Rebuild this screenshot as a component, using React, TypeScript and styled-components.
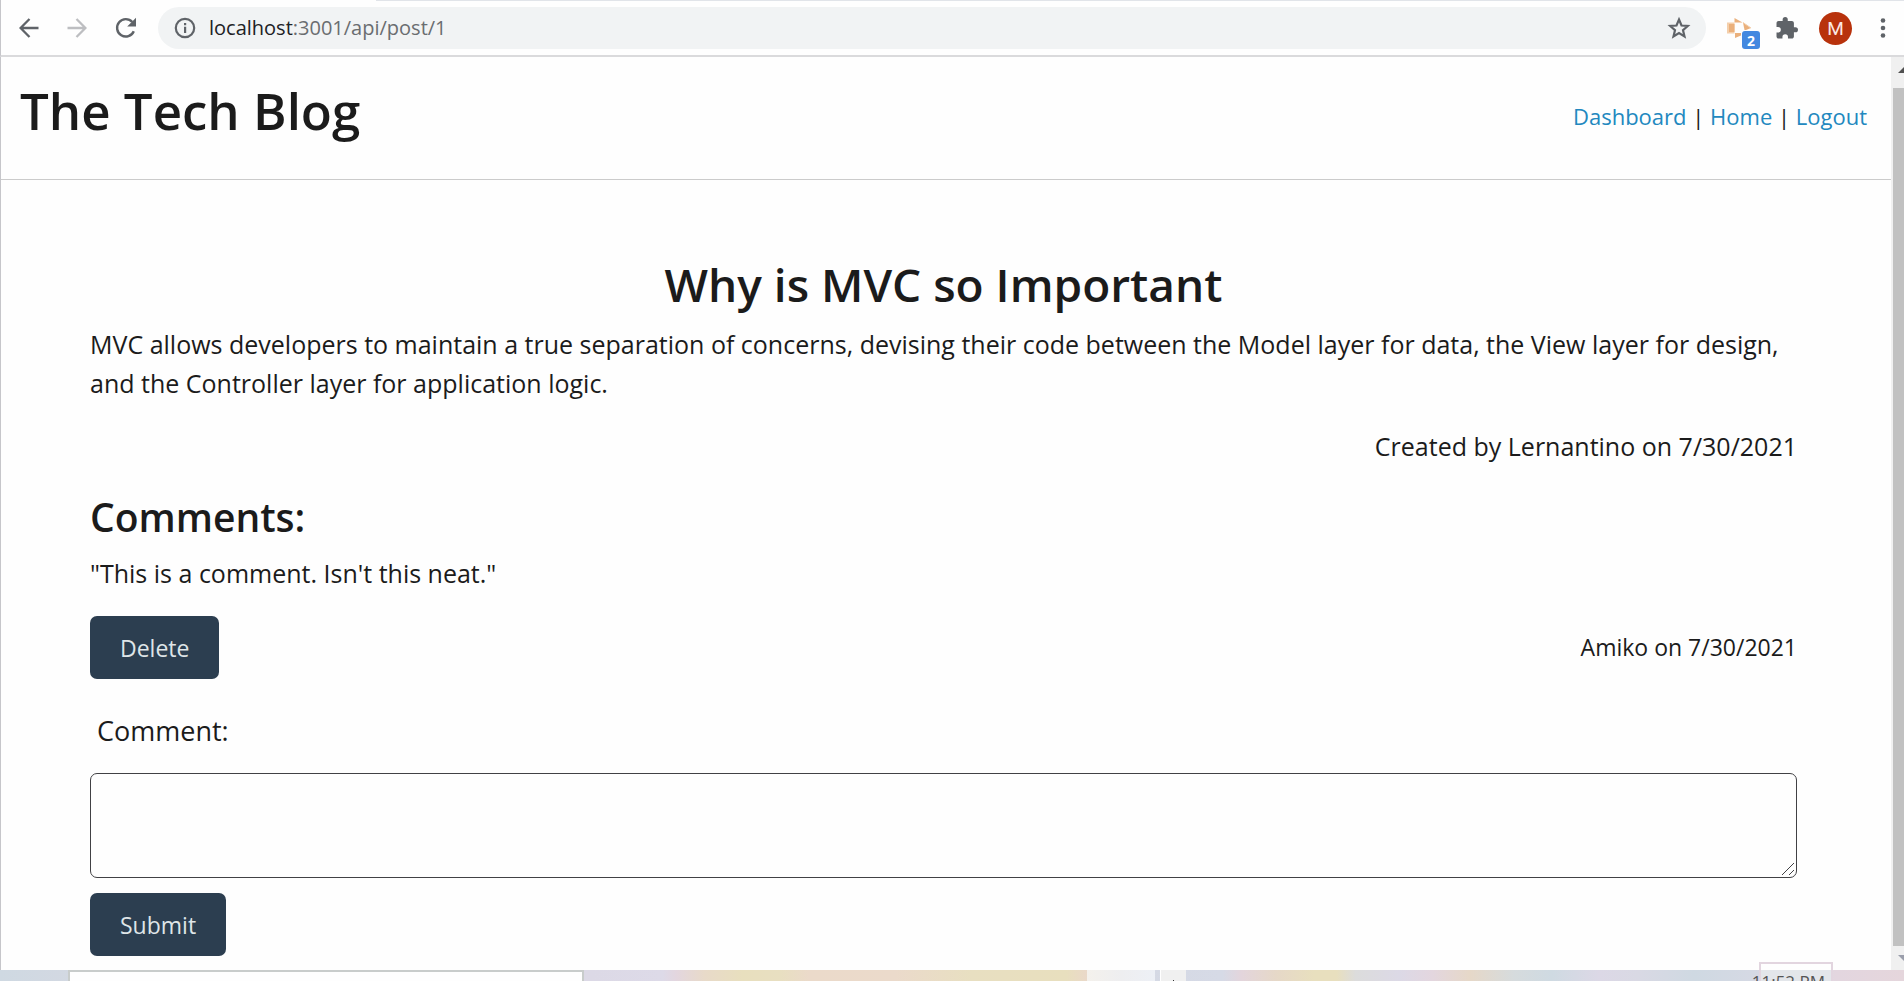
import React from "react";
import styled, { createGlobalStyle } from "styled-components";

const GlobalStyle = createGlobalStyle`
  *, *::before, *::after { box-sizing: border-box; }
  body {
    margin: 0;
    background: #fefefe;
    color: #1b1b1b;
    font-family: "Open Sans", "Noto Sans", sans-serif;
    font-size: 25px;
    line-height: 39px;
  }
  h1, h2, p { margin: 0; }
  button { font: inherit; cursor: pointer; }
`;

const Screen = styled.div`
  min-height: 100vh;
  display: flex;
  flex-direction: column;
  overflow: hidden;
`;

const Toolbar = styled.div`
  display: flex;
  align-items: center;
  height: 57px;
  padding: 1px 10px 0 18px;
  border-bottom: 2px solid #dadadc;
  border-left: 1px solid #c6c6ca;
  background: linear-gradient(#e1e4e9, #e1e4e9) 375px 0 / 100% 1px no-repeat #fefefe;
`;

const IconButton = styled.button<{ $gap?: number }>`
  display: flex;
  flex: none;
  padding: 0;
  margin-right: ${(p) => p.$gap ?? 0}px;
  border: 0;
  background: none;
  color: #5f6368;
  &:disabled { color: #bdbec1; }
`;

const AddressBar = styled.div`
  flex: 1;
  display: flex;
  align-items: center;
  height: 42px;
  margin-right: 20px;
  padding: 0 14px;
  border-radius: 21px;
  background: #f1f3f4;
`;

const Address = styled.span`
  flex: 1;
  padding-left: 10px;
  font-size: 20px;
  line-height: 28px;
  color: #6a6d70;
  strong { font-weight: 400; color: #202124; }
`;

const Extension = styled.button`
  position: relative;
  flex: none;
  width: 34px;
  height: 42px;
  padding: 0;
  margin-right: 16px;
  border: 0;
  background: none;
  svg { display: block; }
`;

const Badge = styled.span`
  position: absolute;
  right: 0;
  bottom: 0;
  width: 18px;
  height: 18px;
  border-radius: 3px;
  background: #4388e0;
  color: #fff;
  font-size: 14px;
  font-weight: 700;
  line-height: 20px;
  text-align: center;
`;

const Avatar = styled.button`
  flex: none;
  width: 33px;
  height: 33px;
  padding: 0;
  margin-right: 20px;
  border: 0;
  border-radius: 50%;
  background: #b8320c;
  color: #fbe9e4;
  && { font-family: Roboto, sans-serif; font-size: 19px; line-height: 33px; }
`;

const Viewport = styled.div`
  flex: 1;
  display: flex;
`;

const Page = styled.div`
  flex: 1;
  min-width: 0;
  border-left: 1px solid #c6c6ca;
`;

const Header = styled.header`
  display: flex;
  justify-content: space-between;
  align-items: flex-end;
  padding: 21px 24px 37px 19px;
  border-bottom: 1px solid #cbcbcb;
`;

const SiteTitle = styled.h1`
  font-size: 51px;
  font-weight: 600;
  line-height: 64px;
`;

const Nav = styled.nav`
  font-size: 22px;
  line-height: 52px;
  a { color: #2288bf; text-decoration: none; }
`;

const Main = styled.main`
  padding: 75px 94px 14px 89px;
`;

const PostTitle = styled.h2`
  margin-bottom: 12px;
  font-size: 46px;
  font-weight: 600;
  line-height: 58px;
  text-align: center;
`;

const Byline = styled.p`
  margin: 24px 0 26px;
  text-align: right;
`;

const SectionTitle = styled.h2`
  margin-bottom: 12px;
  font-size: 39px;
  font-weight: 600;
  line-height: 50px;
`;

const CommentFooter = styled.div`
  display: flex;
  justify-content: space-between;
  align-items: center;
  margin: 23px 0 32px;
  font-size: 23px;
`;

const Button = styled.button`
  height: 63px;
  padding: 2px 30px 0;
  border: 0;
  border-radius: 7px;
  background: #2c3e50;
  color: #dfe5e8;
  && { font-size: 23px; line-height: 39px; }
`;

const Form = styled.form`
  display: flex;
  flex-direction: column;
  align-items: flex-start;
`;

const Label = styled.label`
  margin-bottom: 22px;
  padding-left: 7px;
  font-size: 27px;
  line-height: 40px;
`;

const Field = styled.div`
  position: relative;
  display: flex;
  width: 100%;
  margin-bottom: 15px;
`;

const TextArea = styled.textarea`
  width: 100%;
  height: 105px;
  padding: 10px;
  border: 1px solid #414144;
  border-radius: 7px;
  background: transparent;
  font: inherit;
  resize: vertical;
  &::-webkit-resizer { background: transparent; }
`;

const Grip = styled.svg`
  position: absolute;
  right: 2px;
  bottom: 2px;
  pointer-events: none;
`;

const ScrollTrack = styled.div`
  flex: none;
  width: 13px;
  display: flex;
  flex-direction: column;
  padding-left: 2px;
  background: #f0f0f0;
  overflow: hidden;
`;

const ScrollArrow = styled.svg`
  display: block;
  flex: none;
  width: 18px;
`;

const ScrollThumb = styled.div`
  flex: 1;
  background: #c1c1c1;
`;

const Desktop = styled.div`
  position: relative;
  display: flex;
  height: 11px;
  background: linear-gradient(
    90deg,
    #cfd9e2 0, #d3d8e2 4%, #dcd9e6 31%, #dddae8 34.8%, #e3d6df 35.5%, #e8dac9 37%,
    #e8dfbe 39%, #e8dfc1 41%, #ebdaca 42.5%, #ebdacb 47%, #e8dfc1 51%, #e8dfbe 56%,
    #ead9c8 57%, #d5d9e4 60%, #d6dae6 64.2%, #e3d5dc 65.2%, #e6d8c8 67%, #e8dfbe 69%,
    #e8dfbe 70.2%, #dcdcdc 71.2%, #dcd9e6 73.5%, #e3d6df 75.2%, #e6d8c8 77.2%,
    #d6dbdd 79.5%, #cfdae2 81.5%, #dcd8e6 84%, #d9d9e4 86%, #cfd9e2 89%,
    #d5d9e4 92%, #e3d6df 96.5%, #e5d6dc 100%
  );
`;

const SearchBox = styled.div`
  width: 27.1%;
  margin-left: 68px;
  border: 2px solid #c8cccb;
  border-bottom: 0;
  background: #fefefe;
`;

const TaskHighlight = styled.div`
  width: 68px;
  margin-left: 503px;
  background: linear-gradient(90deg, #f4f1ec, #eeeef0, #edf0f6);
`;

const TaskButton = styled.div`
  width: 26px;
  margin-left: 5px;
  border-left: 1px solid #fff;
  background: #f0f0f0;
  &::after {
    content: "";
    display: block;
    width: 1px;
    height: 1px;
    margin: 10px 0 0 12px;
    background: #333;
  }
`;

const ClockTip = styled.div`
  position: absolute;
  right: 71px;
  bottom: 0;
  width: 74px;
  height: 19px;
  border: 2px solid #e2d5df;
  border-bottom: 0;
  background: linear-gradient(#fefefe 6px, #e3e6ea 6px);
`;

const Clock = styled.div`
  position: absolute;
  right: 79px;
  bottom: 0;
  height: 8px;
  overflow: hidden;
  font-size: 17px;
  line-height: 18px;
  color: #555;
`;

export default function App() {
  return (
    <>
      <GlobalStyle />
      <Screen>
        <Toolbar>
          <IconButton aria-label="Back" $gap={28}>
            <svg width="20" height="20" viewBox="0 0 20 20" fill="none" stroke="currentColor" strokeWidth="2.3">
              <path d="M19.500 10H2M10.500 1 1.600 10l8.900 9" />
            </svg>
          </IconButton>
          <IconButton aria-label="Forward" disabled $gap={28}>
            <svg width="20" height="20" viewBox="0 0 20 20" fill="none" stroke="currentColor" strokeWidth="2.3">
              <path d="M.5 10H18M9.500 1l8.900 9-8.900 9" />
            </svg>
          </IconButton>
          <IconButton aria-label="Reload" $gap={21}>
            <svg width="22" height="22" viewBox="0 0 22 22" fill="none">
              <path d="M18.800 14.200A8.700 8.700 0 1 1 17.300 5" stroke="currentColor" strokeWidth="2.400" />
              <path d="M21 .8v8.700h-8.800z" fill="currentColor" />
            </svg>
          </IconButton>
          <AddressBar>
            <IconButton aria-label="Site information">
              <svg width="27" height="22" viewBox="0 0 27 22" fill="none">
                <circle cx="13" cy="11" r="9.200" stroke="currentColor" strokeWidth="2.200" />
                <path d="M12 9.800h2.200V16H12zM12 6h2.200v2.200H12z" fill="currentColor" />
              </svg>
            </IconButton>
            <Address><strong>localhost</strong>:3001/api/post/1</Address>
            <IconButton aria-label="Bookmark">
              <svg width="26" height="24" viewBox="0 0 26 24" fill="none" stroke="currentColor" strokeWidth="2.200">
                <path d="M13 3.500l2.500 6 6.300.5-4.800 4.200 1.500 6.300-5.500-3.400-5.500 3.400L9 14.200 4.200 10l6.300-.5z" />
              </svg>
            </IconButton>
          </AddressBar>
          <Extension aria-label="Extension, 2 notifications">
            <svg width="34" height="42" viewBox="0 0 34 42" fill="#eab07c">
              <path d="M1 15.500h7.500v11H1z" fill="#f4cfab" />
              <path d="M3 17h5.500v8H3z" />
              <path d="M8.500 11l8 4.500h-8z" />
              <path d="M9 26h6v2.500L9 31z" />
              <path d="M17 15.500l8 5.500-5 2h-1.500z" />
              <path d="M17 15.500l8 5.500" stroke="#f4cfab" />
            </svg>
            <Badge>2</Badge>
          </Extension>
          <IconButton aria-label="Extensions" $gap={21}>
            <svg width="22" height="22" viewBox="1.500 1 21.500 21.500" fill="currentColor">
              <path d="M20.500 11H19V7c0-1.100-.9-2-2-2h-4V3.500a2.500 2.500 0 0 0-5 0V5H4c-1.100 0-2 .9-2 2v3.800h1.500a2.700 2.700 0 0 1 0 5.400H2V20c0 1.100.9 2 2 2h3.800v-1.500a2.700 2.700 0 0 1 5.400 0V22H17c1.100 0 2-.9 2-2v-4h1.500a2.500 2.500 0 0 0 0-5z" />
            </svg>
          </IconButton>
          <Avatar aria-label="Profile">M</Avatar>
          <IconButton aria-label="Menu">
            <svg width="22" height="22" viewBox="0 0 22 22" fill="currentColor">
              <circle cx="11" cy="3.500" r="2.300" />
              <circle cx="11" cy="11" r="2.300" />
              <circle cx="11" cy="18.500" r="2.300" />
            </svg>
          </IconButton>
        </Toolbar>
        <Viewport>
          <Page>
            <Header>
              <SiteTitle>The Tech Blog</SiteTitle>
              <Nav>
                <a href="#dashboard">Dashboard</a> | <a href="#home">Home</a> | <a href="#logout">Logout</a>
              </Nav>
            </Header>
            <Main>
              <PostTitle>Why is MVC so Important</PostTitle>
              <p>
                MVC allows developers to maintain a true separation of concerns, devising their code between the
                Model layer for data, the View layer for design, and the Controller layer for application logic.
              </p>
              <Byline>Created by Lernantino on 7/30/2021</Byline>
              <SectionTitle>Comments:</SectionTitle>
              <p>"This is a comment. Isn't this neat."</p>
              <CommentFooter>
                <Button type="button">Delete</Button>
                <span>Amiko on 7/30/2021</span>
              </CommentFooter>
              <Form onSubmit={(e) => e.preventDefault()}>
                <Label htmlFor="comment">Comment:</Label>
                <Field>
                  <TextArea id="comment" />
                  <Grip width="14" height="14" viewBox="0 0 14 14" stroke="#414144" strokeWidth="1">
                    <path d="M1 13 13 1M8 13l5-5" />
                  </Grip>
                </Field>
                <Button type="submit">Submit</Button>
              </Form>
            </Main>
          </Page>
          <ScrollTrack>
            <ScrollArrow height="31" viewBox="0 0 18 31" fill="#505050">
              <path d="M5 16h14l-7-7z" />
            </ScrollArrow>
            <ScrollThumb />
            <ScrollArrow height="24" viewBox="0 0 18 24" fill="#9a9eab">
              <path d="M5 9h14l-7 7z" />
            </ScrollArrow>
          </ScrollTrack>
        </Viewport>
        <Desktop>
          <SearchBox />
          <TaskHighlight />
          <TaskButton />
          <ClockTip />
          <Clock>11:52 PM</Clock>
        </Desktop>
      </Screen>
    </>
  );
}
